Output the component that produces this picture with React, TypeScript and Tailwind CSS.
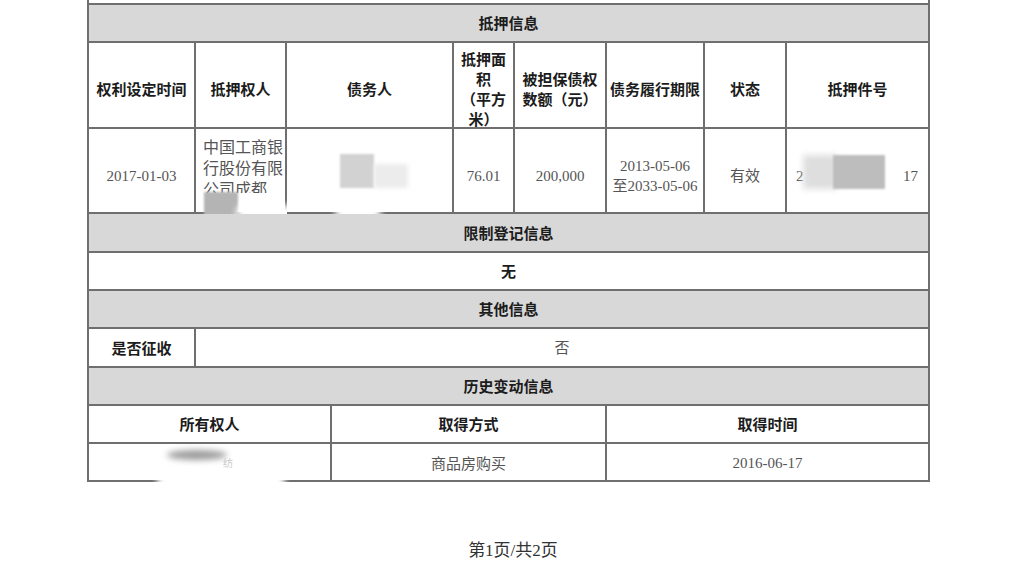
import type { ReactNode } from "react";

const line = "border-r-2 border-b-2 border-[#6f6f6f]";
const head = "font-['Noto_Sans_CJK_SC',sans-serif] font-bold text-[15px] leading-[20px] text-[#1c1c1c]";
const data = "font-['Liberation_Serif','Noto_Sans_CJK_SC',serif] text-[15px] leading-[20px] text-[#555]";

function Cell({ children, className = "" }: { children?: ReactNode; className?: string }) {
  return <div className={`${line} relative flex min-h-0 items-center text-center ${className}`}>{children}</div>;
}

function SectionTitle({ title, h }: { title: string; h: string }) {
  return (
    <div className="grid grid-cols-1">
      <Cell className={`${h} justify-center bg-[#d8d8d8] ${head}`}>{title}</Cell>
    </div>
  );
}

export default function App() {
  const mortgageCols = "grid grid-cols-[107px_91px_167px_61px_92px_98px_82px_143px]";
  const mh = `justify-center pt-[8px] ${head}`;
  const md = `justify-center pt-[11px] ${data}`;

  return (
    <div className="min-h-[563px] w-[1026px] overflow-hidden bg-white">
      {/* 上一张表的残边 */}
      <div className="ml-[87px] h-[3px] w-[843px] border-x-2 border-[#6f6f6f]" />

      <div className="ml-[87px] w-[843px] border-l-2 border-t-2 border-[#6f6f6f]">
        {/* 抵押信息 */}
        <SectionTitle title="抵押信息" h="h-[38px]" />
        <div className={`${mortgageCols} grid-rows-[86px]`}>
          <Cell className={mh}>权利设定时间</Cell>
          <Cell className={mh}>抵押权人</Cell>
          <Cell className={mh}>债务人</Cell>
          <Cell className={mh}>
            <span>
              抵押面
              <br />积
              <br />（平方
              <br />米）
            </span>
          </Cell>
          <Cell className={mh}>
            <span>
              被担保债权
              <br />
              数额（元）
            </span>
          </Cell>
          <Cell className={mh}>债务履行期限</Cell>
          <Cell className={mh}>状态</Cell>
          <Cell className={mh}>抵押件号</Cell>
        </div>
        <div className={`${mortgageCols} grid-rows-[85px]`}>
          <Cell className={md}>2017-01-03</Cell>
          <Cell className={`${data} items-start justify-start`}>
            <div className="h-[64px] overflow-hidden pl-[7px] pt-[8px] text-left text-[16px] leading-[21px]">
              中国工商银行股份有限公司成都
            </div>
            <div className="absolute left-[8px] top-[63px] h-[28px] w-[34px] bg-[#b4b4b4] blur-[1px]" />
            <div className="absolute -bottom-[9px] left-[40px] h-[16px] w-[60px] rounded-full bg-white blur-[3px]" />
          </Cell>
          <Cell className={md}>
            <div className="absolute left-[53px] top-[25px] h-[34px] w-[34px] bg-[#d2d2d2] blur-[1px]" />
            <div className="absolute left-[87px] top-[35px] h-[24px] w-[34px] bg-[#ececec] blur-[2px]" />
            <div className="absolute -bottom-[9px] left-[48px] h-[16px] w-[46px] rounded-full bg-white blur-[3px]" />
          </Cell>
          <Cell className={md}>76.01</Cell>
          <Cell className={md}>200,000</Cell>
          <Cell className={md}>
            <span>
              2013-05-06
              <br />
              至2033-05-06
            </span>
          </Cell>
          <Cell className={md}>有效</Cell>
          <Cell className={`${data} justify-between pl-[9px] pr-[10px] pt-[11px]`}>
            <span>2</span>
            <span>17</span>
            <div className="absolute left-[16px] top-[26px] h-[34px] w-[34px] bg-[#dedede] blur-[3px]" />
            <div className="absolute left-[46px] top-[26px] h-[34px] w-[52px] bg-[#bdbdbd] blur-[1px]" />
          </Cell>
        </div>

        {/* 限制登记信息 */}
        <SectionTitle title="限制登记信息" h="h-[39px]" />
        <div className="grid grid-cols-1">
          <Cell className={`h-[38px] justify-center ${head}`}>无</Cell>
        </div>

        {/* 其他信息 */}
        <SectionTitle title="其他信息" h="h-[38px]" />
        <div className="grid grid-cols-[107px_734px]">
          <Cell className={`h-[39px] justify-center ${head}`}>是否征收</Cell>
          <Cell className={`justify-center ${data}`}>否</Cell>
        </div>

        {/* 历史变动信息 */}
        <SectionTitle title="历史变动信息" h="h-[38px]" />
        <div className="grid grid-cols-[243px_275px_323px] grid-rows-[38px]">
          <Cell className={`justify-center ${head}`}>所有权人</Cell>
          <Cell className={`justify-center ${head}`}>取得方式</Cell>
          <Cell className={`justify-center ${head}`}>取得时间</Cell>
        </div>
        <div className="grid grid-cols-[243px_275px_323px] grid-rows-[38px]">
          <Cell className={`justify-center ${data}`}>
            <div className="absolute left-[78px] top-[6px] h-[10px] w-[60px] rounded-[50%] bg-[#9a9a9a] blur-[3px]" />
            <span className="absolute left-[134px] top-[10px] text-[10px] text-[#c8c8c8]">纺</span>
            <div className="absolute -bottom-[12px] left-[68px] h-[22px] w-[128px] rounded-full bg-white blur-[3px]" />
          </Cell>
          <Cell className={`justify-center pt-[3px] ${data}`}>商品房购买</Cell>
          <Cell className={`justify-center pt-[2px] ${data}`}>2016-06-17</Cell>
        </div>
      </div>

      {/* 页码 */}
      <div className="mt-[58px] flex justify-center">
        <span className="font-['Liberation_Serif','Noto_Sans_CJK_SC',serif] text-[17px] leading-[22px] text-[#333]">
          第1页/共2页
        </span>
      </div>
    </div>
  );
}
